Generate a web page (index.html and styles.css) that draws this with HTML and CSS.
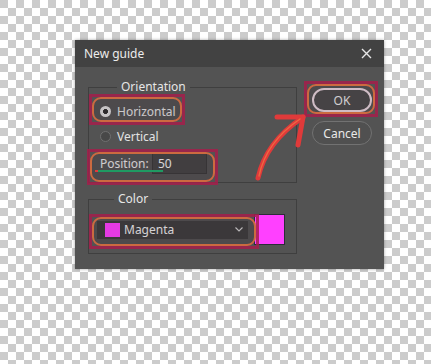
FILE: index.html
```html
<!DOCTYPE html>
<html>
<head>
<meta charset="utf-8">
<link rel="stylesheet" href="styles.css">
</head>
<body>
<div class="page">
  <div class="dialog">
    <div class="titlebar">
      <span class="title">New guide</span>
      <svg class="close" width="11" height="11" viewBox="0 0 11 11"><path d="M1 1 L10 10 M10 1 L1 10" stroke="#e6e6e6" stroke-width="1.4" fill="none"/></svg>
    </div>
    <div class="body">
      <div class="left">
        <fieldset class="group orient">
          <legend>Orientation</legend>
          <div class="row radio-row"><span class="radio on"></span><span>Horizontal</span></div>
          <div class="row radio-row"><span class="radio"></span><span>Vertical</span></div>
          <div class="row pos-row"><span class="pos-label">Position:</span><span class="input">50</span></div>
        </fieldset>
        <fieldset class="group color">
          <legend>Color</legend>
          <div class="row color-row">
            <div class="select">
              <span class="mini-swatch"></span>
              <span class="select-text">Magenta</span>
              <svg class="chev" width="8" height="5" viewBox="0 0 8 5"><path d="M0.5 0.5 L4 4 L7.5 0.5" stroke="#cfcfcf" stroke-width="1.1" fill="none"/></svg>
            </div>
            <span class="big-swatch"></span>
          </div>
        </fieldset>
      </div>
      <div class="buttons">
        <div class="btn ok">OK</div>
        <div class="btn">Cancel</div>
      </div>
    </div>
  </div>

  <div class="hl hl-horiz"><div class="hl-in"></div></div>
  <div class="hl hl-pos"><div class="hl-in"></div></div>
  <div class="hl hl-mag"><div class="hl-in"></div></div>
  <div class="hl hl-ok"><div class="hl-in"></div></div>
  <div class="green-line"></div>
  <svg class="arrow" width="431" height="364" viewBox="0 0 431 364">
    <path d="M258 178 Q 266 142 302 118" stroke="#e03a3a" stroke-width="5" fill="none" stroke-linecap="round"/>
    <path d="M303 117 L 277 117" stroke="#e03a3a" stroke-width="5" fill="none" stroke-linecap="round"/>
    <path d="M303 117 L 298 145" stroke="#e03a3a" stroke-width="5" fill="none" stroke-linecap="round"/>
    <path d="M259 176 Q 266 142 300 119" stroke="#f27a45" stroke-width="1.4" fill="none" stroke-linecap="round" opacity="0.7"/>
  </svg>
</div>
</body>
</html>
```

FILE: styles.css
```css
html, body {
  margin: 0;
  padding: 0;
}
body {
  width: 431px;
  height: 364px;
  overflow: hidden;
  background-color: #ffffff;
  background-image:
    linear-gradient(45deg, #cccccc 25%, transparent 25%, transparent 75%, #cccccc 75%),
    linear-gradient(45deg, #cccccc 25%, transparent 25%, transparent 75%, #cccccc 75%);
  background-size: 16px 16px;
  background-position: 8px 0, 0 8px;
  font-family: "Noto Sans", "Open Sans", sans-serif;
  color: #e2e2e2;
}
.page {
  position: relative;
  width: 431px;
  height: 364px;
  padding: 40px 0 0 75px;
  box-sizing: border-box;
}
.dialog {
  width: 309px;
  height: 229px;
  background: #535353;
  box-shadow: 0 0 3px rgba(0,0,0,0.35);
  display: flex;
  flex-direction: column;
}
.titlebar {
  height: 27px;
  background: #424242;
  display: flex;
  align-items: center;
  justify-content: space-between;
  padding: 0 12px 0 9px;
  box-sizing: border-box;
}
.title {
  font-size: 12px;
  color: #ececec;
}
.close {
  display: block;
}
.body {
  display: flex;
  padding: 12px 12px 0 13px;
  gap: 15px;
}
.left {
  width: 209px;
  display: flex;
  flex-direction: column;
  gap: 8px;
}
.group {
  margin: 0;
  border: 1px solid #3f3f3f;
  padding: 5px 8px 8px 11px;
  min-width: 0;
}
.group legend {
  padding: 0 4px;
  margin-left: 17px;
  font-size: 12px;
  line-height: 16px;
  color: #e6e6e6;
}
.row {
  display: flex;
  align-items: center;
  font-size: 12px;
}
.radio-row {
  height: 22px;
  gap: 6px;
  margin-bottom: 3px;
}
.radio {
  width: 11px;
  height: 11px;
  border-radius: 50%;
  box-sizing: border-box;
  border: 1px solid #707070;
  background: #484848;
}
.radio.on {
  border: none;
  background: radial-gradient(circle, #2e2e2e 0 2.2px, #dcdcdc 2.8px);
}
.pos-row {
  height: 22px;
  margin-top: 5px;
}
.pos-label {
  width: 52px;
  color: #e6e6e6;
}
.input {
  width: 55px;
  height: 22px;
  box-sizing: border-box;
  background: #454545;
  border: 1px solid #3a3a3a;
  padding-left: 5px;
  display: flex;
  align-items: center;
  color: #f0f0f0;
}
.group.color {
  padding: 7px 10px 8px 8px;
}
.color-row {
  gap: 6px;
}
.select {
  width: 151px;
  height: 18px;
  background: #3e3e3e;
  display: flex;
  align-items: center;
  box-sizing: border-box;
  padding-left: 8px;
  padding-right: 5px;
}
.mini-swatch {
  width: 15px;
  height: 14px;
  background: #ff40ff;
  margin-right: 4px;
}
.select-text {
  flex: 1;
  color: #ececec;
}
.chev {
  display: block;
}
.big-swatch {
  width: 31px;
  height: 31px;
  box-sizing: border-box;
  background: #ff40ff;
  border: 1px solid #2c2c3a;
}
.buttons {
  display: flex;
  flex-direction: column;
  gap: 9px;
  padding-top: 9px;
}
.btn {
  width: 60px;
  height: 24px;
  box-sizing: border-box;
  border-radius: 12px;
  border: 1px solid #727272;
  display: flex;
  align-items: center;
  justify-content: center;
  font-size: 12px;
  color: #e8e8e8;
  background: #505050;
}
.btn.ok {
  border: 2px solid #e6d4dc;
  background: #4a4a4a;
}

/* annotation overlays */
.hl {
  position: absolute;
  box-sizing: border-box;
  border: 3px solid rgba(165, 30, 75, 0.85);
}
.hl-in {
  position: absolute;
  inset: 0;
  border: 2.5px solid #cc6a40;
  border-radius: 9px;
  background: rgba(40, 20, 30, 0.12);
}
.hl-horiz { left: 89px; top: 94px; width: 96px; height: 31px; }
.hl-pos { left: 87px; top: 149px; width: 131px; height: 36px; }
.hl-mag { left: 89px; top: 214px; width: 170px; height: 35px; }
.hl-ok { left: 304px; top: 81px; width: 74px; height: 36px; }
.green-line {
  position: absolute;
  left: 95px;
  top: 170px;
  width: 65px;
  height: 2px;
  background: #1f9a62;
  border-left: 3px solid #e23a3a;
}
.arrow {
  position: absolute;
  left: 0;
  top: 0;
  pointer-events: none;
}
```
